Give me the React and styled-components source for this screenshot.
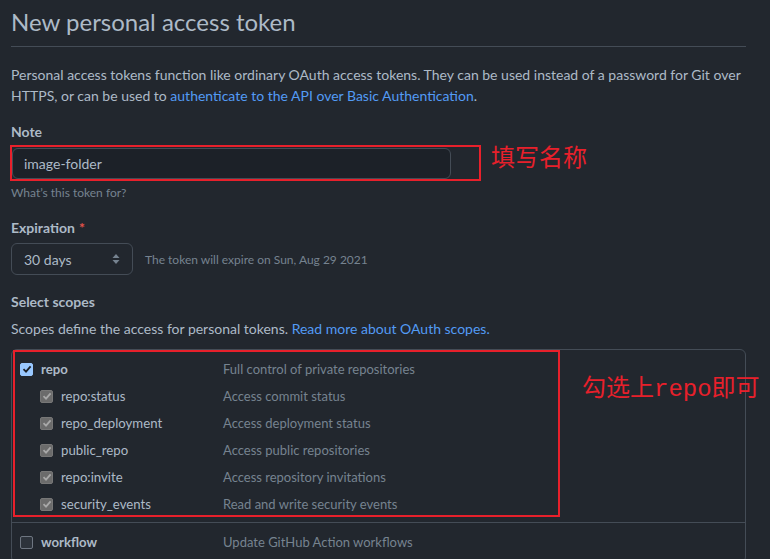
import React from "react";
import styled, { createGlobalStyle } from "styled-components";

const GlobalStyle = createGlobalStyle`
  html, body { margin: 0; padding: 0; background: #22272e; }
  body {
    font-family: "Lato", "Noto Sans", "Liberation Sans", sans-serif;
    color: #adbac7;
    font-size: 14px;
  }
`;

const Page = styled.div`
  width: 735px;
  padding: 0 0 0 11px;
`;

const Title = styled.h2`
  margin: 0;
  padding: 7px 0 9px;
  font-size: 24px;
  line-height: 30px;
  font-weight: 400;
  color: #adbac7;
  border-bottom: 1px solid #444c56;
`;

const Intro = styled.p`
  margin: 17px 0 15px;
  line-height: 21px;
`;

const Link = styled.a`
  color: #539bf5;
  text-decoration: none;
`;

const Group = styled.div`
  margin-bottom: ${(p) => p.$mb ?? 15}px;
`;

const Label = styled.label`
  display: block;
  font-weight: 700;
  line-height: 21px;
`;

const Required = styled.span`
  color: #e5534b;
  margin-left: 4px;
`;

const Field = styled.div`
  position: relative;
  margin-top: 5.5px;
  margin-left: 1px;
  display: flex;
  align-items: center;
  gap: 12px;
`;

const Input = styled.div`
  box-sizing: border-box;
  width: 439px;
  height: 31px;
  padding: 0 11px;
  display: flex;
  align-items: center;
  background: #1c2128;
  border: 1px solid #444c56;
  border-radius: 6px;
  color: #adbac7;
`;

const Hint = styled.div`
  margin-top: 5px;
  font-size: 12px;
  line-height: 18px;
  color: #768390;
`;

const Select = styled.div`
  box-sizing: border-box;
  width: 122px;
  height: 32px;
  margin-left: -1px;
  padding: 0 12px;
  display: flex;
  align-items: center;
  justify-content: space-between;
  border: 1px solid #444c56;
  border-radius: 6px;
  background: #22272e;
  color: #adbac7;
`;

const InlineNote = styled.span`
  font-size: 12px;
  color: #768390;
`;

const Desc = styled.div`
  margin-top: 6px;
  line-height: 21px;
`;

const Table = styled.div`
  position: relative;
  margin-top: 9.5px;
  border: 1px solid #444c56;
  border-radius: 6px;
  width: 733px;
  font-size: 13.2px;
`;

const Section = styled.div`
  padding: 6px 0 ${(p) => p.$pb}px;
  border-top: ${(p) => (p.$divider ? "1px solid #444c56" : "none")};
`;

const Row = styled.div`
  display: grid;
  grid-template-columns: 203px 1fr;
  align-items: center;
  height: 27px;
  padding-left: 8px;
`;

const Name = styled.div`
  display: flex;
  align-items: center;
  gap: 8px;
  padding-left: ${(p) => (p.$sub ? 20 : 0)}px;
  font-weight: ${(p) => (p.$sub ? 400 : 700)};
  color: #adbac7;
`;

const Box = styled.span`
  box-sizing: border-box;
  width: 13px;
  height: 13px;
  border-radius: 2px;
  display: inline-flex;
  align-items: center;
  justify-content: center;
  background: ${(p) =>
    p.$state === "on" ? "#99c8ff" : p.$state === "dis" ? "#6b6b6b" : "#2d333b"};
  border: 1px solid
    ${(p) => (p.$state === "on" ? "#99c8ff" : p.$state === "dis" ? "#777" : "#6e7681")};
  color: ${(p) => (p.$state === "on" ? "#1c2128" : "#a8a8a8")};
`;

const ScopeDesc = styled.span`
  font-size: 13px;
  color: #768390;
`;

const RedFrame = styled.div`
  position: absolute;
  box-sizing: border-box;
  border: 2px solid #e8202b;
  pointer-events: none;
  left: ${(p) => p.$l}px;
  top: ${(p) => p.$t}px;
  width: ${(p) => p.$w}px;
  height: ${(p) => p.$h}px;
`;

const Annotation = styled.div`
  position: absolute;
  white-space: nowrap;
  left: ${(p) => p.$l}px;
  top: ${(p) => p.$t}px;
  font-family: "Liberation Mono", "Noto Sans CJK SC", monospace;
  font-size: 24px;
  line-height: 24px;
  color: #e8202b;
`;

const Arrows = () => (
  <svg width="8" height="12" viewBox="0 0 8 12" fill="#768390">
    <path d="M4 1 L7.5 5 H0.5 Z" />
    <path d="M4 11 L7.5 7 H0.5 Z" />
  </svg>
);

const Check = () => (
  <svg width="10" height="10" viewBox="0 0 10 10" fill="none">
    <path d="M1.5 5.2 L4 7.6 L8.6 2.4" stroke="currentColor" strokeWidth="1.8" />
  </svg>
);

const CheckBox = ({ state }) => (
  <Box $state={state}>{state !== "off" && <Check />}</Box>
);

const subs = [
  ["repo:status", "Access commit status"],
  ["repo_deployment", "Access deployment status"],
  ["public_repo", "Access public repositories"],
  ["repo:invite", "Access repository invitations"],
  ["security_events", "Read and write security events"],
];

export default function App() {
  return (
    <>
      <GlobalStyle />
      <Page>
        <Title>New personal access token</Title>
        <Intro>
          Personal access tokens function like ordinary OAuth access tokens. They can be used instead of a password for Git over
          <br />
          HTTPS, or can be used to <Link>authenticate to the API over Basic Authentication</Link>.
        </Intro>

        <Group>
          <Label>Note</Label>
          <Field>
            <Input>image-folder</Input>
            <RedFrame $l={-2} $t={-3} $w={471} $h={36} />
            <Annotation $l={479} $t={0}>填写名称</Annotation>
          </Field>
          <Hint>What’s this token for?</Hint>
        </Group>

        <Group $mb={16}>
          <Label>
            Expiration<Required>*</Required>
          </Label>
          <Field>
            <Select>
              <span>30 days</span>
              <Arrows />
            </Select>
            <InlineNote>The token will expire on Sun, Aug 29 2021</InlineNote>
          </Field>
        </Group>

        <Label>Select scopes</Label>
        <Desc>
          Scopes define the access for personal tokens. <Link>Read more about OAuth scopes.</Link>
        </Desc>

        <Table>
          <Section $pb={4}>
            <Row>
              <Name>
                <CheckBox state="on" />
                repo
              </Name>
              <ScopeDesc>Full control of private repositories</ScopeDesc>
            </Row>
            {subs.map(([n, d]) => (
              <Row key={n}>
                <Name $sub>
                  <CheckBox state="dis" />
                  {n}
                </Name>
                <ScopeDesc>{d}</ScopeDesc>
              </Row>
            ))}
          </Section>
          <Section $divider $pb={6}>
            <Row>
              <Name>
                <CheckBox state="off" />
                workflow
              </Name>
              <ScopeDesc>Update GitHub Action workflows</ScopeDesc>
            </Row>
          </Section>
          <RedFrame $l={1} $t={0} $w={547} $h={167} />
          <Annotation $l={570} $t={28}>勾选上repo即可</Annotation>
        </Table>
      </Page>
    </>
  );
}
